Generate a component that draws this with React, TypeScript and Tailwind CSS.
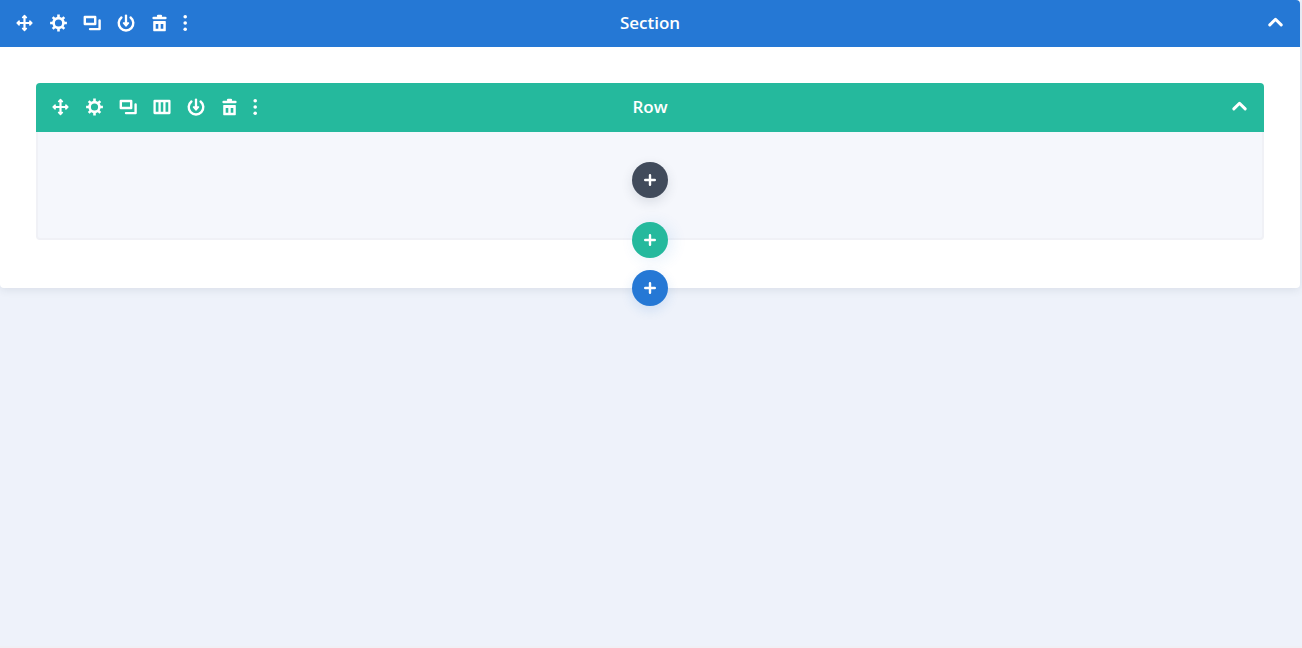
import React from 'react';

interface IconProps {
  className?: string;
}

interface IconButtonProps {
  label: string;
  children: React.ReactNode;
}

interface AddButtonProps {
  label: string;
  className: string;
}

interface BarProps {
  title: string;
  className: string;
  hasColumns?: boolean;
}

const MoveIcon = ({ className = 'size-[18px]' }: IconProps) => (
  <svg viewBox="0 0 18 18" className={className} fill="currentColor" stroke="currentColor" strokeLinejoin="round">
    <path d="M9.5 3v12M3.5 9h12" strokeWidth="2.2" />
    <path d="M9.5 1.6 11.4 3.6H7.6zM9.5 16.4 7.6 14.4h3.8zM2.1 9 4.1 7.1v3.8zM16.9 9 14.9 10.9V7.1z" strokeWidth="1.5" />
  </svg>
);

const GearIcon = ({ className = 'size-[18px]' }: IconProps) => (
  <svg viewBox="0 0 18 18" className={className} fill="none" stroke="currentColor">
    <circle cx="9.5" cy="9" r="4.9" strokeWidth="2.6" />
    <path
      d="M9.5 .6v3M9.5 14.4v3M1.1 9h3M14.9 9h3M3.7 3.2l2 2M13.3 12.8l2 2M3.7 14.8l2-2M13.3 5.2l2-2"
      strokeWidth="2.6"
    />
  </svg>
);

const DuplicateIcon = ({ className = 'size-[18px]' }: IconProps) => (
  <svg viewBox="0 0 18 18" className={className} fill="none" stroke="currentColor" strokeWidth="2.4" strokeLinejoin="round">
    <path d="M1.8 3h10.4v7H1.8z" />
    <path d="M16.6 6.5v8.6H7" strokeLinecap="round" />
  </svg>
);

const ColumnsIcon = ({ className = 'size-[18px]' }: IconProps) => (
  <svg viewBox="0 0 18 18" className={className} fill="none" stroke="currentColor" strokeWidth="2.3" strokeLinejoin="round">
    <path d="M1.6 3h14.8v12H1.6zM6.6 3v12M11.4 3v12" />
  </svg>
);

const SaveIcon = ({ className = 'size-[18px]' }: IconProps) => (
  <svg viewBox="0 0 18 18" className={className} fill="none" stroke="currentColor" strokeLinecap="round" strokeLinejoin="round">
    <path d="M4.4 3.5a7.3 7.3 0 1 0 9.2 0" strokeWidth="2.4" />
    <path d="M9 1.6v8" strokeWidth="2.3" />
    <path d="M6.4 9h5.2L9 12z" fill="currentColor" strokeWidth="1.3" />
  </svg>
);

const TrashIcon = ({ className = 'size-[18px]' }: IconProps) => (
  <svg viewBox="0 0 18 18" className={className} fill="none" stroke="currentColor" strokeLinejoin="round">
    <path d="M2.6 4h11.8" strokeWidth="2.4" strokeLinecap="round" />
    <path d="M7.1 2h2.8" strokeWidth="2.4" strokeLinecap="round" />
    <path
      d="M2.8 7h11.4a.6.6 0 0 1 .6.6v9a.6.6 0 0 1-.6.6H2.8a.6.6 0 0 1-.6-.6v-9a.6.6 0 0 1 .6-.6zM4.7 10v4.8h2.6V10zM9.7 10v4.8h2.6V10z"
      fill="currentColor"
      fillRule="evenodd"
      stroke="none"
    />
  </svg>
);

const DotsIcon = ({ className = 'h-[18px] w-1' }: IconProps) => (
  <svg viewBox="0 0 4 18" className={className} fill="currentColor">
    <circle cx="2.2" cy="2.8" r="1.8" />
    <circle cx="2.2" cy="9" r="1.8" />
    <circle cx="2.2" cy="15.2" r="1.8" />
  </svg>
);

const ChevronUpIcon = ({ className = 'size-[18px]' }: IconProps) => (
  <svg viewBox="0 0 18 18" className={className} fill="none" stroke="currentColor" strokeWidth="3" strokeLinecap="round" strokeLinejoin="round">
    <path d="m2.8 10.9 5.7-5.6 5.7 5.6" />
  </svg>
);

const PlusIcon = ({ className = 'size-3' }: IconProps) => (
  <svg viewBox="0 0 12 12" className={className} fill="none" stroke="currentColor" strokeWidth="2.4" strokeLinecap="round">
    <path d="M6 1.2v9.6M1.2 6h9.6" />
  </svg>
);

const IconButton: React.FC<IconButtonProps> = ({ label, children }) => (
  <button type="button" aria-label={label} className="block">
    {children}
  </button>
);

const AddButton: React.FC<AddButtonProps> = ({ label, className }) => (
  <button
    type="button"
    aria-label={label}
    className={`flex size-9 items-center justify-center rounded-full text-white ${className}`}
  >
    <PlusIcon />
  </button>
);

const Bar: React.FC<BarProps> = ({ title, className, hasColumns = false }) => (
  <header className={`grid grid-cols-[1fr_auto_1fr] items-center px-[15px] pb-px text-white ${className}`}>
    <div className="flex items-center gap-3.5">
      <div className="flex items-center gap-4">
        <IconButton label={`Move ${title}`}><MoveIcon /></IconButton>
        <IconButton label={`${title} settings`}><GearIcon /></IconButton>
        <IconButton label={`Duplicate ${title}`}><DuplicateIcon /></IconButton>
        {hasColumns && <IconButton label="Change columns"><ColumnsIcon /></IconButton>}
        <IconButton label={`Save ${title}`}><SaveIcon /></IconButton>
        <IconButton label={`Delete ${title}`}><TrashIcon /></IconButton>
      </div>
      <IconButton label="More options"><DotsIcon /></IconButton>
    </div>
    <h2 className="text-[17px] leading-6 font-semibold">{title}</h2>
    <div className="flex justify-end">
      <IconButton label={`Collapse ${title}`}><ChevronUpIcon /></IconButton>
    </div>
  </header>
);

const App: React.FC = () => {
  return (
    <main className="min-h-screen border-b-2 border-[#f0f0f5] bg-[#eef2fa] pr-0.5 font-['Open_Sans',sans-serif]">
      <section className="relative rounded-b-sm bg-white shadow-[0_2px_8px_rgba(43,56,80,0.1)]">
        <Bar title="Section" className="h-[47px] rounded-tr-sm bg-[#2578d5]" />
        <div className="px-9 pt-9 pb-12">
          <div className="relative">
            <Bar title="Row" className="h-[49px] rounded-t-sm bg-[#25b99d]" hasColumns />
            <div className="flex justify-center rounded-b-sm border-2 border-t-0 border-[#f0f1f6] bg-[#f5f7fc] pt-[30px] pb-10">
              <AddButton label="Add module" className="bg-[#414b5b] shadow-[0_4px_12px_rgba(43,56,80,0.14)]" />
            </div>
            <div className="absolute inset-x-0 bottom-0 flex translate-y-1/2 justify-center">
              <AddButton label="Add row" className="bg-[#25b99d] shadow-[4px_2px_16px_rgba(37,120,213,0.12)]" />
            </div>
          </div>
        </div>
        <div className="absolute inset-x-0 bottom-0 flex translate-y-1/2 justify-center">
          <AddButton label="Add section" className="bg-[#2578d5] shadow-[0_4px_12px_rgba(37,120,213,0.16)]" />
        </div>
      </section>
    </main>
  );
};

export default App;
